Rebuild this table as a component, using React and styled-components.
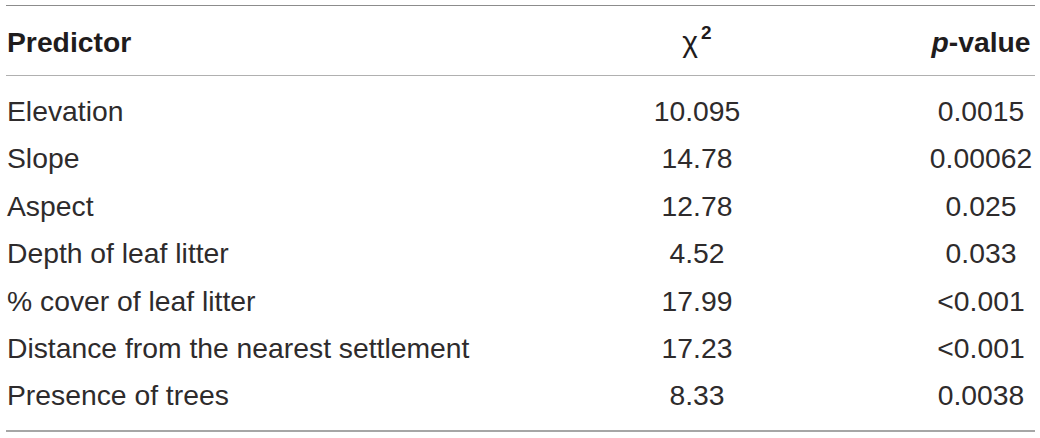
import React from "react";
import styled, { createGlobalStyle } from "styled-components";

const GlobalStyle = createGlobalStyle`
  html, body {
    margin: 0;
    padding: 0;
    background: #fff;
  }
  body {
    font-family: "Liberation Sans", Arial, Helvetica, sans-serif;
    color: #2e2b2c;
  }
`;

const Wrapper = styled.div`
  width: 1040px;
  height: 438px;
  padding: 5px 5px 0 6px;
  box-sizing: border-box;
`;

const Table = styled.div`
  width: 1029px;
  border-top: 1px solid #8c8c8c;
  border-bottom: 2px solid #a6a6a6;
`;

const Row = styled.div`
  display: grid;
  grid-template-columns: 461px 460px 108px;
  font-size: 28.3px;
  height: 47.4px;
  line-height: 47.4px;
  white-space: nowrap;
`;

const HeadRow = styled(Row)`
  height: 70px;
  line-height: 66px;
  padding-top: 3px;
  box-sizing: border-box;
  font-weight: bold;
  color: #1f1c1d;
  border-bottom: 1px solid #b0b0b0;
`;

const Body = styled.div`
  padding: 12px 0 10px;
`;

const Cell = styled.div`
  text-align: ${(p) => p.align || "left"};
  padding-left: ${(p) => (p.align === "left" || !p.align ? "1px" : "0")};
`;

const Chi = styled.span`
  font-weight: normal;
  font-size: 30px;
`;

const Sup = styled.sup`
  font-size: 19px;
  font-weight: bold;
  vertical-align: 13px;
  line-height: 0;
  margin-left: 3px;
`;

const rows = [
  ["Elevation", "10.095", "0.0015"],
  ["Slope", "14.78", "0.00062"],
  ["Aspect", "12.78", "0.025"],
  ["Depth of leaf litter", "4.52", "0.033"],
  ["% cover of leaf litter", "17.99", "<0.001"],
  ["Distance from the nearest settlement", "17.23", "<0.001"],
  ["Presence of trees", "8.33", "0.0038"],
];

const App = () => {
  return (
    <Wrapper>
      <GlobalStyle />
      <Table>
        <HeadRow>
          <Cell>Predictor</Cell>
          <Cell align="center">
            <Chi>χ</Chi>
            <Sup>2</Sup>
          </Cell>
          <Cell align="center">
            <i>p</i>-value
          </Cell>
        </HeadRow>
        <Body>
          {rows.map((r) => (
            <Row key={r[0]}>
              <Cell>{r[0]}</Cell>
              <Cell align="center">{r[1]}</Cell>
              <Cell align="center">{r[2]}</Cell>
            </Row>
          ))}
        </Body>
      </Table>
    </Wrapper>
  );
};

export default App;
